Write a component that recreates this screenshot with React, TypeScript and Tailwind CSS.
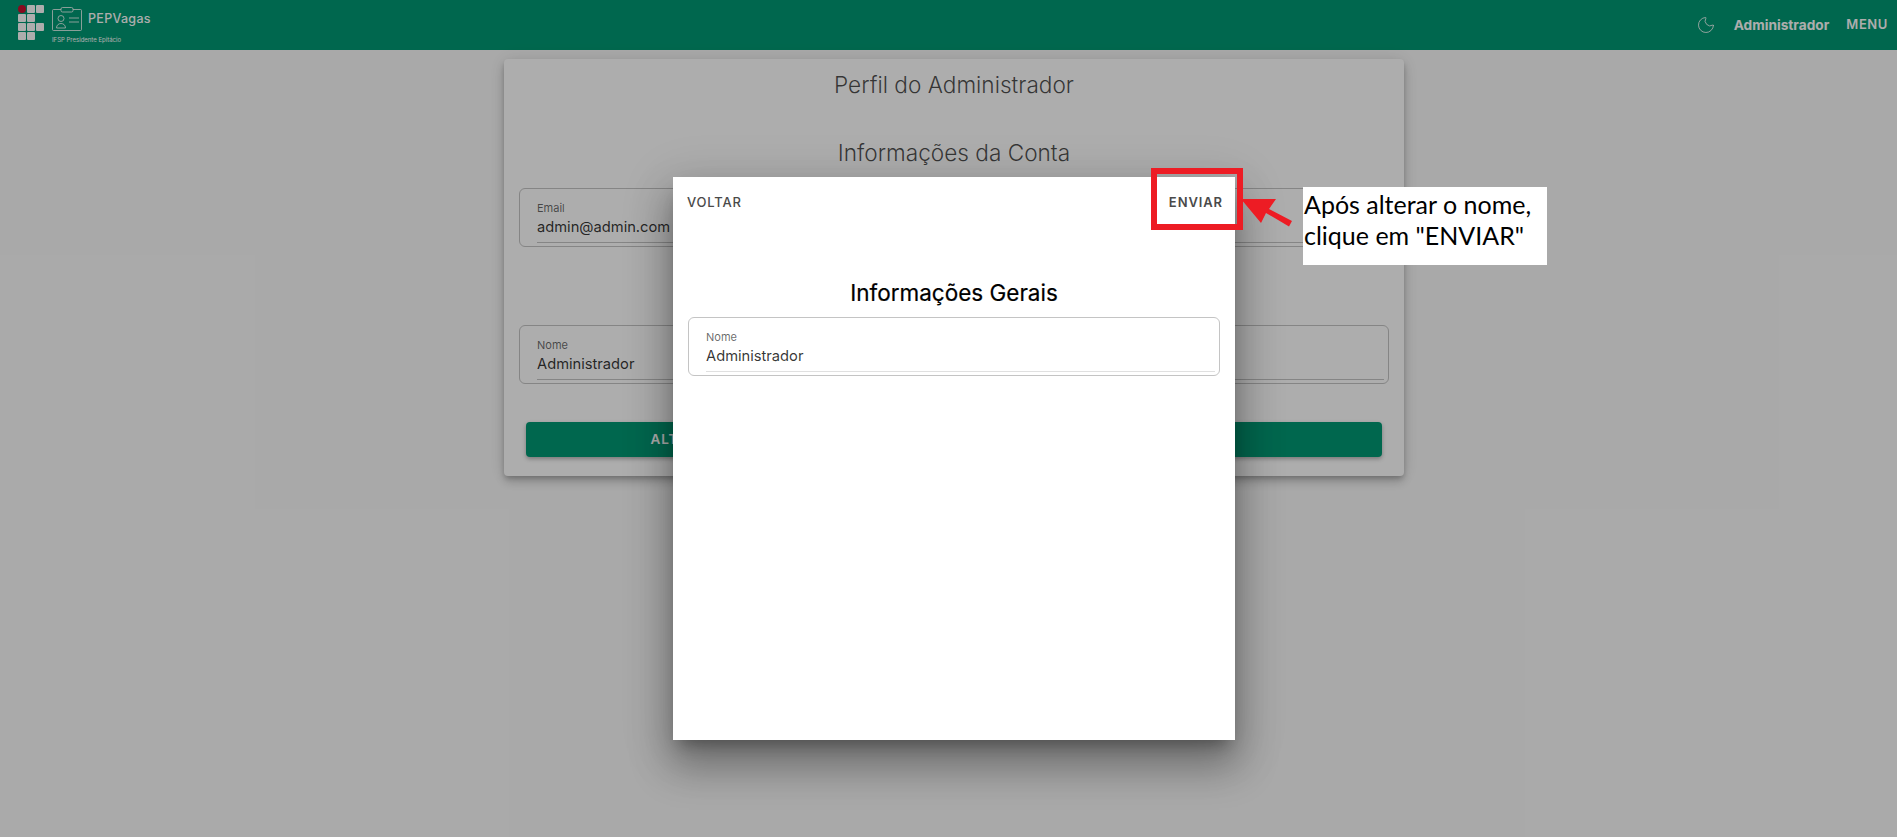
import { Moon } from 'lucide-react';

const inter = 'font-["Inter",sans-serif]';

function Field({ label, value, line }: { label: string; value: string; line: string }) {
  return (
    <div className={`h-[59px] rounded-md border border-[#c4c4c4] pl-[17px] pr-[4px] pt-[11px] ${inter}`}>
      <div className="text-[11px] leading-[16px] text-black/60">{label}</div>
      <div className={`mt-[-1px] h-[28px] border-b ${line} text-[14.7px] leading-[24px] text-black/80`}>{value}</div>
    </div>
  );
}

function Logo() {
  const cells = [1, 1, 1, 1, 1, 0, 1, 1, 1, 1, 1, 0];
  return (
    <div className="grid w-[26px] grid-cols-3 gap-[1px]">
      {cells.map((on, i) => (
        <div
          key={i}
          className={`h-[8px] w-[8px] ${i === 0 ? 'rounded-full bg-[#c8102e]' : on ? 'rounded-[1px] bg-white' : ''}`}
        />
      ))}
    </div>
  );
}

function Badge() {
  return (
    <svg width="31" height="25" viewBox="0 0 31 25" fill="none" stroke="white" strokeWidth="0.8">
      <rect x="0.5" y="2.5" width="29" height="21" rx="1" />
      <rect x="9" y="0.5" width="12" height="4.5" rx="1.5" fill="#009973" />
      <circle cx="9" cy="11.5" r="3" />
      <path d="M4.5 21c0-6 9-6 9 0z" />
      <path d="M17 11h10M17 15h10" />
    </svg>
  );
}

export default function App() {
  return (
    <div className={`relative min-h-screen overflow-hidden bg-[#fafafa] ${inter}`}>
      <header className="flex h-[50px] items-center bg-[#009973] text-white">
        <div className="ml-[18px] mt-[-5px]">
          <Logo />
        </div>
        <div className="ml-[8px]">
          <div className="flex items-center">
            <Badge />
            <span className="ml-[5px] text-[12.5px] font-medium tracking-[0.3px]">PEPVagas</span>
          </div>
          <div className="mt-[4px] text-[6px] leading-[8px]">IFSP Presidente Epitácio</div>
        </div>
        <div className="ml-auto flex items-center">
          <Moon size={20} strokeWidth={1} />
          <span className="ml-[18px] mr-[3px] text-[13.7px] font-bold">Administrador</span>
          <span className="ml-[14px] mr-[9px] text-[13px] font-semibold tracking-[0.6px]">MENU</span>
        </div>
      </header>

      <main className="ml-[504px] mt-[9px] h-[417px] w-[900px] rounded-[4px] bg-white px-[15px] shadow-[0_3px_5px_-1px_rgba(0,0,0,0.2),0_6px_10px_rgba(0,0,0,0.14),0_1px_18px_rgba(0,0,0,0.12)]">
        <h1 className="pt-[11px] text-center text-[22.6px] leading-[30px] font-light text-black/70">Perfil do Administrador</h1>
        <h2 className="mt-[38px] text-center text-[22.6px] leading-[30px] font-light text-black/70">Informações da Conta</h2>
        <div className="mt-[20px]">
          <Field label="Email" value="admin@admin.com" line="border-[#c4c4c4]" />
        </div>
        <div className="mt-[78px]">
          <Field label="Nome" value="Administrador" line="border-[#c4c4c4]" />
        </div>
        <div className="mx-[7px] mt-[38px] grid h-[35px] grid-cols-2 items-center rounded-[4px] bg-[#009973] text-center text-[13.5px] font-semibold tracking-[1px] text-white shadow-[0_2px_4px_rgba(0,0,0,0.3)]">
          <span className="pl-[4px]">ALTERAR INFORMAÇÕES</span>
          <span />
        </div>
      </main>

      {/* backdrop */}
      <div className="absolute inset-0 bg-black/[0.32]" />

      {/* dialog */}
      <div className="absolute left-[673px] top-[177px] h-[563px] w-[562px] bg-white shadow-[0_24px_38px_3px_rgba(0,0,0,0.3),0_9px_46px_8px_rgba(0,0,0,0.1),0_11px_15px_-7px_rgba(0,0,0,0.3)]">
        <div className="flex h-[51px] items-center justify-between pl-[14px] pr-[12px] text-[13px] font-medium tracking-[0.8px] text-[#4a4a4a]">
          <span>VOLTAR</span>
          <span className="font-semibold tracking-[0.9px]">ENVIAR</span>
        </div>
        <h2 className="mt-[50px] text-center text-[22.5px] leading-[30px] text-black [-webkit-text-stroke:0.2px_black]">Informações Gerais</h2>
        <div className="mx-[15px] mt-[9px]">
          <Field label="Nome" value="Administrador" line="border-[#e0e0e0]" />
        </div>
      </div>

      {/* tutorial annotation */}
      <div className="absolute left-[1151px] top-[168px] h-[62px] w-[92px] border-[6px] border-[#ed1c24]" />
      <svg className="absolute left-[1238px] top-[195px]" width="58" height="36" viewBox="0 0 58 36">
        <path d="M3 4h35l-7 10L54 26l-3 5.500-23-13.500L23 28z" fill="#ed1c24" />
      </svg>
      <div className='absolute left-[1303px] top-[187px] h-[78px] w-[244px] bg-white pl-[1px] pt-[2px] font-["Lato",sans-serif] text-[25px] leading-[31px] text-black'>
        Após alterar o nome,
        <br />
        clique em "ENVIAR"
      </div>
    </div>
  );
}
